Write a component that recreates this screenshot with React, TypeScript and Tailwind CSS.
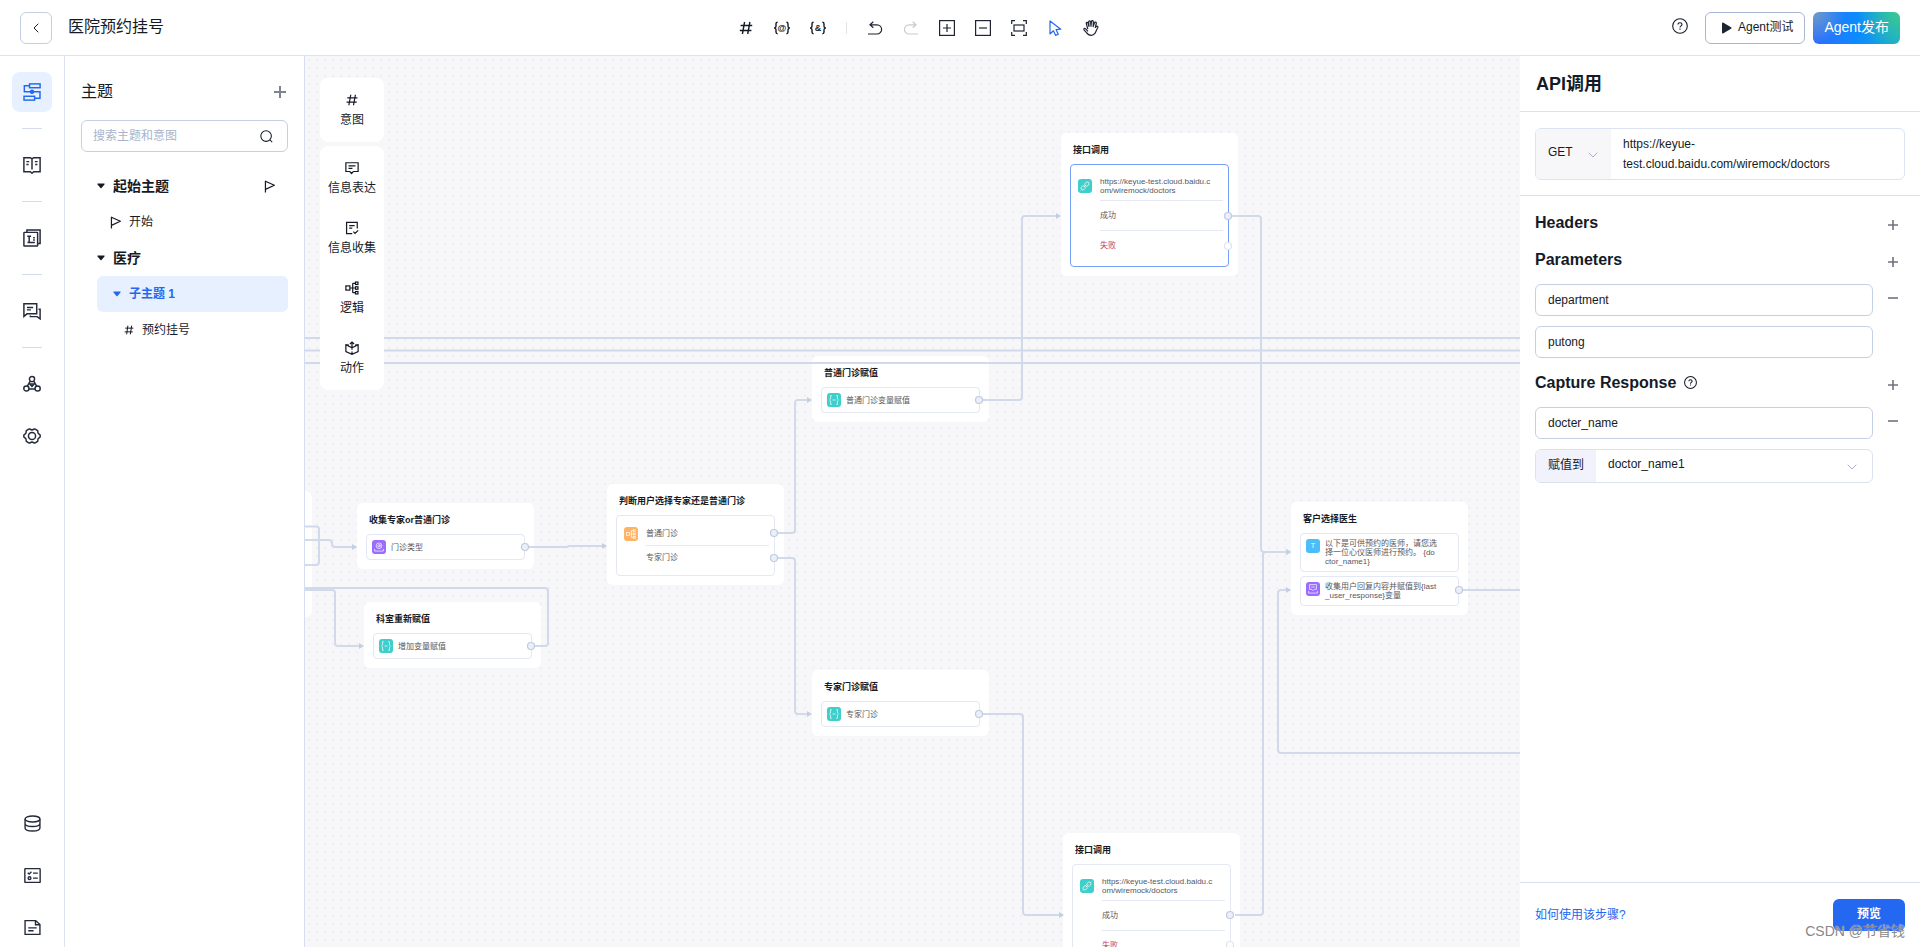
import type { ReactNode } from 'react';
import { ChevronDown, ChevronLeft } from 'lucide-react';
import clsx from 'clsx';

const INK = '#1f2433';

/* ---------- icons ---------- */

interface IconProps {
  children: ReactNode;
  size?: number;
  width?: number;
  className?: string;
}

function Icon({ children, size = 16, width = 1.2, className }: IconProps) {
  return (
    <svg
      width={size}
      height={size}
      viewBox="0 0 16 16"
      fill="none"
      stroke="currentColor"
      strokeWidth={width}
      className={clsx('shrink-0', className)}
      aria-hidden="true"
    >
      {children}
    </svg>
  );
}

const HashShape = <path d="M6.6 2 4.4 14M11.9 2 9.7 14M2.6 5.5h11.6M1.8 10.5h11.6" />;
const FlagShape = <path d="M3 15.5V1.5l11 5L3 11.5" strokeLinejoin="round" />;
const PlusShape = <path d="M8 3v10M3 8h10" />;
const MinusShape = <path d="M3 8h10" />;
const HelpShape = (
  <>
    <circle cx="8" cy="8" r="7.3" />
    <path d="M6 6.6c0-1.2.9-1.9 2-1.9s2 .7 2 1.8c0 1.3-2 1.5-2 2.9M8 10.6v1.2" />
  </>
);

const FlowShape = (
  <>
    <rect x="5.8" y=".8" width="9.4" height="3.4" />
    <rect x=".9" y="11.8" width="9.4" height="3.4" />
    <path d="M5.8 2.5H1.2v5.300h13.900v5.700h-4.800M8 6.200v3.400" />
    <circle cx="8" cy="7.800" r="1.300" fill="currentColor" />
  </>
);
const BookShape = (
  <>
    <path d="M.8 1.500h5.700L8 2.600l1.500-1.100h5.700v12.500H9.500L8 15.300 6.500 14H.8zM8 2.600V12" />
    <path d="M3 5h2.500M3 7.500h2M10.500 5H13M10.800 7.500h2" />
  </>
);
const LibraryShape = (
  <>
    <rect x=".8" y="3" width="12.200" height="12.200" rx=".5" />
    <path d="M3.500 3V.8h11.700v12H13M3.800 6.500h3.400M5.500 6.500v5M9 7.800h1.500M9 9.800h1.500M4 12h6.500" />
  </>
);
const ChatShape = (
  <>
    <path d="M.8 1.500h11.400v9H3.600L.8 12.800zM3.500 4.800h5.500M3.500 7h3.500" />
    <path d="M13.800 6.500h1.400v8.500l-2.700-2H6.500v-1" />
  </>
);
const NodesShape = (
  <>
    <circle cx="8" cy="3.600" r="2.300" />
    <circle cx="3" cy="12" r="2.300" />
    <circle cx="13" cy="12" r="2.300" />
    <path d="M6.500 5.500 3.800 9.800M9.500 5.500l2.700 4.300M5.300 12.500h5.400M6 8l2 2.200L10 8z" />
  </>
);
const GearShape = (
  <>
    <path
      d="M5.200 1.800h.6L8 2.700l2.200-.9h.6l1.900 1.100.4.500.3 2.100 1.700 1.500.2.500v1l-.2.500-1.700 1.500-.3 2.100-.4.500-1.900 1.100h-.6L8 13.300l-2.200.9h-.6l-1.900-1.100-.4-.5-.3-2.100L.9 9 .7 8.500v-1L.9 7l1.700-1.500.3-2.100.4-.5z"
      strokeLinejoin="round"
    />
    <circle cx="8" cy="8" r="3.200" />
  </>
);
const DatabaseShape = (
  <>
    <ellipse cx="8" cy="3.800" rx="7" ry="2.800" />
    <path d="M1 3.800v8.400C1 13.800 4.100 15 8 15s7-1.200 7-2.800V3.800M1 8c0 1.600 3.100 2.800 7 2.800s7-1.200 7-2.800" />
  </>
);
const ChecklistShape = (
  <>
    <rect x=".8" y="1.500" width="14.400" height="13" rx=".5" />
    <path d="m3.500 5.500 1.300 1.200 2.200-2.200M8.500 5.800H13M8.500 10.500H13" />
    <circle cx="5.200" cy="10.500" r="1.300" />
  </>
);
const DocumentShape = <path d="M1 1.500h10L15 5.200v9.300H1zM10.800 1.500v3.900H15M4 8.300h8M4 11h5" />;

const MessageShape = <path d="M1 2h14v10H9.500l-2 2.300-2-2.300H1zM4 5.500h8M4 8.300h4.500" />;
const CollectShape = <path d="M14 8.500v-7H1.800v13h6.500M4.800 5.200h6.200M4.800 8.200h3.500M9.500 12.200l2 2 3.500-3.500" />;
const TreeShape = (
  <>
    <rect x="1" y="5.600" width="4.600" height="4.800" />
    <path d="M5.600 8H12M8.800 2.600v10.800M8.800 2.600H12M8.800 13.400H12" />
    <rect x="12" y="1.200" width="2.800" height="2.800" />
    <rect x="12" y="6.600" width="2.800" height="2.800" />
    <rect x="12" y="12" width="2.800" height="2.800" />
  </>
);
const ActionShape = <path d="M4.500 4.800 1 4.200v8L8 15.200l7-3v-8l-3.500.6M8 15V12M8 10V1.200M5.600 3.400 8 1.200l2.400 2.200M1.500 4.500 8 7.800l6.500-3.300" />;

function BraceIcon({ symbol }: { symbol: string }) {
  return (
    <Icon width={1.4}>
      <path d="M3.600 2.300c-1.300 0-1.600.6-1.600 1.700v2.200c0 1-.4 1.500-1.500 1.800 1.100.3 1.500.8 1.500 1.800V12c0 1.100.3 1.700 1.600 1.700M12.400 2.300c1.300 0 1.600.6 1.600 1.700v2.200c0 1 .4 1.500 1.500 1.800-1.100.3-1.500.8-1.500 1.800V12c0 1.100-.3 1.700-1.600 1.700" />
      <text x="8" y="11" fontSize="9" fontWeight="700" textAnchor="middle" fill="currentColor" stroke="none">
        {symbol}
      </text>
    </Icon>
  );
}

/* ---------- header ---------- */

const TOOLS = [
  { label: '意图', icon: <Icon width={1.4}>{HashShape}</Icon> },
  { label: '变量', icon: <BraceIcon symbol="@" /> },
  { label: '函数', icon: <BraceIcon symbol="&" /> },
];

const VIEW_TOOLS = [
  { label: '撤销', color: 'text-[#1f2433]', icon: <Icon><path d="M1 14h9a4.600 4.600 0 0 0 0-9.200H3.500M6.300 1.800l-3.300 3 3.300 2.900" /></Icon> },
  { label: '重做', color: 'text-[#c8cad0]', icon: <Icon><path d="M15 14H6a4.600 4.600 0 0 1 0-9.200h6.500M9.700 1.800l3.300 3-3.300 2.900" /></Icon> },
  { label: '放大', color: 'text-[#1f2433]', icon: <Icon><rect x=".6" y=".6" width="14.800" height="14.800" /><path d="M8 4v8M4 8h8" /></Icon> },
  { label: '缩小', color: 'text-[#1f2433]', icon: <Icon><rect x=".6" y=".6" width="14.800" height="14.800" /><path d="M4 8h8" /></Icon> },
  { label: '适应画布', color: 'text-[#1f2433]', icon: <Icon><path d="M.7 4V.7H4M12 .7h3.300V4M15.300 12v3.300H12M4 15.300H.7V12" /><rect x="3" y="5" width="10" height="6" /></Icon> },
  { label: '选择', color: 'text-[#2468f2]', icon: <Icon><path d="M3 1v13l3.400-3.200 2.300 4.600 2.600-1.200-2.200-4.500 4.700-.5z" strokeLinejoin="round" /></Icon> },
  {
    label: '拖动',
    color: 'text-[#1f2433]',
    icon: (
      <Icon>
        <path d="M4.800 9 3.300 3.600c-.3-1.500 1.300-1.800 1.700-.5L6 6.500 5.700 2c0-1.500 1.700-1.500 1.900 0L8 6.300l.4-4.800c.2-1.300 1.800-1.200 1.900.1l-.1 5 1.300-3.800c.5-1.200 2-.7 1.800.5l-1 4.200 1-1c1-.8 2 .1 1.400 1.200-1.200 2-1.600 4.300-3 6-.8 1-1.900 1.600-3.300 1.600-2.500 0-3.800-1-4.900-2.700L1 9.800c-.5-1 .6-1.900 1.500-1.100L5 11.300" strokeLinejoin="round" />
      </Icon>
    ),
  },
];

function Header() {
  return (
    <header className="flex h-14 shrink-0 items-center justify-between border-b border-[#dfe3ee] bg-white px-5">
      <div className="flex items-center gap-4">
        <button aria-label="返回" className="flex h-8 w-8 items-center justify-center rounded-md border border-[#c4cfe3]">
          <ChevronLeft size={16} strokeWidth={1.5} />
        </button>
        <h1 className="pb-0.5 text-base leading-6">医院预约挂号</h1>
      </div>

      <div className="flex items-center gap-5">
        {TOOLS.map(t => (
          <button key={t.label} aria-label={t.label}>{t.icon}</button>
        ))}
        <span className="h-3 w-px bg-[#e2e4ea]" />
        {VIEW_TOOLS.map(t => (
          <button key={t.label} aria-label={t.label} className={t.color}>{t.icon}</button>
        ))}
      </div>

      <div className="flex items-center">
        <button aria-label="帮助" className="mr-[17px] pb-1">
          <Icon width={1.1}>{HelpShape}</Icon>
        </button>
        <button className="mr-2 flex h-8 items-center gap-1.5 rounded-md border border-[#a9b6d0] px-[11px] pl-[15px] text-xs">
          <svg width="11" height="12" viewBox="0 0 11 12" aria-hidden="true">
            <path d="M1 1.500C1 .5 1.600.2 2.500.7L10 5.200c.8.500.8 1.100 0 1.600l-7.500 4.500c-.9.500-1.500.2-1.500-.8z" fill={INK} />
          </svg>
          <span className="pb-0.5">Agent测试</span>
        </button>
        <button className="h-8 rounded-md bg-[radial-gradient(circle_at_100%_0%,#3acb8c,transparent_45%),radial-gradient(circle_at_0%_0%,#6f9fc8,transparent_35%),linear-gradient(90deg,#2f6bff,#0c8bff_50%,#18aad8)] px-[11px] pb-0.5 text-sm text-white">
          Agent发布
        </button>
      </div>
    </header>
  );
}

/* ---------- left rail ---------- */

const RAIL_TOP = [
  { label: '流程', shape: FlowShape, active: true, rule: true },
  { label: '知识', shape: BookShape, rule: true },
  { label: '词库', shape: LibraryShape, rule: true },
  { label: '对话', shape: ChatShape, rule: true },
  { label: '渠道', shape: NodesShape, rule: false },
  { label: '设置', shape: GearShape, rule: false },
];

const RAIL_BOTTOM = [
  { label: '数据', shape: DatabaseShape },
  { label: '任务', shape: ChecklistShape },
  { label: '文档', shape: DocumentShape },
];

function Rail() {
  return (
    <nav className="flex w-[65px] shrink-0 flex-col items-center justify-between border-r border-[#dce3f0] bg-white pt-4">
      <div className="flex flex-col items-center">
        {RAIL_TOP.map(item => (
          <div key={item.label} className="flex flex-col items-center">
            <button
              aria-label={item.label}
              className={clsx(
                'flex h-10 w-10 items-center justify-center rounded-lg',
                item.active ? 'bg-[#e6f0ff] text-[#2468f2]' : 'text-[#252a3a]',
              )}
            >
              <Icon size={18} width={1.3}>{item.shape}</Icon>
            </button>
            {item.rule ? <span className="my-4 h-px w-5 bg-[#d4dcec]" /> : <span className="h-3" />}
          </div>
        ))}
      </div>
      <div className="flex flex-col items-center gap-3">
        {RAIL_BOTTOM.map(item => (
          <button key={item.label} aria-label={item.label} className="flex h-10 w-10 items-center justify-center text-[#252a3a]">
            <Icon size={17} width={1.3}>{item.shape}</Icon>
          </button>
        ))}
      </div>
    </nav>
  );
}

/* ---------- topic tree ---------- */

function Caret() {
  return (
    <svg width="8" height="6" viewBox="0 0 8 6" fill="currentColor" className="shrink-0" aria-hidden="true">
      <path d="M1 .5h6c.6 0 .8.5.5.9L4.500 5c-.3.400-.7.400-1 0L.5 1.400C.2 1 .4.5 1 .5z" />
    </svg>
  );
}

function TopicPanel() {
  return (
    <aside className="flex w-60 shrink-0 flex-col border-r border-[#d5ddf0] bg-white px-4 pt-6">
      <div className="flex h-6 items-center justify-between">
        <h2 className="text-base leading-6">主题</h2>
        <button aria-label="新建主题" className="text-[#808490]">
          <Icon width={2}><path d="M8 2v12M2 8h12" /></Icon>
        </button>
      </div>

      <div className="mt-4 flex h-8 items-center rounded-md border border-[#c4d0e4] pr-3.5 pl-[11px]">
        <input
          aria-label="搜索主题和意图"
          placeholder="搜索主题和意图"
          className="min-w-0 flex-1 text-xs outline-none placeholder:text-[#a8b4cc]"
        />
        <Icon size={13} width={1.3}>
          <circle cx="7.500" cy="7.500" r="6.500" />
          <path d="m12 12 3 3" />
        </Icon>
      </div>

      <ul className="mt-4 pl-4 text-xs">
        <li className="flex h-9 items-center pr-3 text-sm font-bold">
          <Caret />
          <span className="ml-2 flex-1">起始主题</span>
          <Icon size={13} width={1.5}>{FlagShape}</Icon>
        </li>
        <li className="flex h-9 items-center pl-3">
          <Icon size={13} width={1.5}>{FlagShape}</Icon>
          <span className="ml-[7px]">开始</span>
        </li>
        <li className="flex h-9 items-center text-sm font-bold">
          <Caret />
          <span className="ml-2">医疗</span>
        </li>
        <li className="flex h-9 items-center rounded-md bg-[#e6f0ff] pl-4 font-bold text-[#2468f2]">
          <Caret />
          <span className="ml-2">子主题 1</span>
        </li>
        <li className="flex h-9 items-center pl-[27px]">
          <Icon size={10} width={1.6}>
            <path d="M6.200 1 4.200 15M12.200 1l-2 14M2 5h13M1 11h13" />
          </Icon>
          <span className="ml-2">预约挂号</span>
        </li>
      </ul>
    </aside>
  );
}

/* ---------- flow nodes ---------- */

type Badge = 'ask' | 'assign' | 'branch' | 'api' | 'text' | 'collect';

const BADGES: Record<Badge, { bg: string; shape: ReactNode }> = {
  ask: {
    bg: 'bg-[#9a6cff]',
    shape: (
      <>
        <circle cx="8" cy="6" r="4.500" />
        <circle cx="8" cy="6" r="1.800" />
        <path d="M9.800 4v3.200M1 11v3.500h14V11" />
      </>
    ),
  },
  assign: {
    bg: 'bg-[#3ccfcb]',
    shape: <path d="M4.500 1H2.500V6.500L.8 8l1.700 1.500V15h2M11.500 1h2v5.500L15.200 8l-1.700 1.500V15h-2M5.500 8h5" />,
  },
  branch: { bg: 'bg-[#ffb366]', shape: TreeShape },
  api: {
    bg: 'bg-[#3ccfcb]',
    shape: (
      <>
        <rect x="8" y="1.500" width="6" height="7" rx="3" transform="rotate(45 11 5)" />
        <rect x="2" y="7.500" width="6" height="7" rx="3" transform="rotate(45 5 11)" />
        <path d="m6 10 4-4M13.500 2.500 15 1M1 15l1.500-1.500" />
      </>
    ),
  },
  text: { bg: 'bg-[#4bbdfa]', shape: null },
  collect: { bg: 'bg-[#9a6cff]', shape: <path d="M2.500 1h11v7.500h-3.500l-2 2-2-2H2.500zM5 4.800h6M1 11v3.500h14V11" /> },
};

function NodeBadge({ kind }: { kind: Badge }) {
  const badge = BADGES[kind];
  return (
    <span className={clsx('flex h-3.5 w-3.5 shrink-0 items-center justify-center rounded-[3px] text-[8px] leading-none text-white/85', badge.bg)}>
      {badge.shape ? <Icon size={10} width={1.300}>{badge.shape}</Icon> : 'T'}
    </span>
  );
}

interface NodeCardProps {
  x: number;
  y: number;
  title: string;
  children?: ReactNode;
}

function NodeCard({ x, y, title, children }: NodeCardProps) {
  return (
    <section
      className="absolute flex w-[177px] flex-col gap-1 rounded-md bg-white px-[9px] pt-[11px] pb-[9px]"
      style={{ left: x, top: y }}
    >
      <h3 className="h-4 pl-[3px] text-[9px] leading-[13px] font-bold whitespace-nowrap">{title}</h3>
      {children}
    </section>
  );
}

function StepBox({ kind, lines }: { kind: Badge; lines: string[] }) {
  return (
    <div className="flex items-start gap-[5px] rounded border border-[#e4e7f4] py-[5px] pl-[5px]">
      <NodeBadge kind={kind} />
      <div className="flex min-h-3.5 flex-col justify-center text-[8px] leading-[9px] whitespace-nowrap text-[#55585f]">
        {lines.map(l => <p key={l}>{l}</p>)}
      </div>
    </div>
  );
}

interface BranchBoxProps {
  kind: Badge;
  rows: { lines: string[]; danger?: boolean }[];
  tall?: boolean;
  selected?: boolean;
}

function BranchBox({ kind, rows, tall, selected }: BranchBoxProps) {
  const rowHeight = tall ? 'h-[29px]' : 'h-[23px]';
  return (
    <div className={clsx('flex gap-2 rounded border py-1.5 pr-[5px] pl-[7px]', selected ? 'border-[#76a0f6]' : 'border-[#e4e7f4]')}>
      <div className={clsx('flex items-center', rowHeight)}>
        <NodeBadge kind={kind} />
      </div>
      <div className="flex-1 divide-y divide-[#e4e9f5] text-[8px] leading-[9px] whitespace-nowrap text-[#55585f]">
        {rows.map(r => (
          <div key={r.lines[0]} className={clsx('box-content flex flex-col justify-center', rowHeight, r.danger && 'text-[#c24560]')}>
            {r.lines.map(l => <p key={l}>{l}</p>)}
          </div>
        ))}
      </div>
    </div>
  );
}

const API_ROWS = [
  { lines: ['https://keyue-test.cloud.baidu.c', 'om/wiremock/doctors'] },
  { lines: ['成功'] },
  { lines: ['失败'], danger: true },
];

/* ---------- edges ---------- */

// right-angled connector with rounded corners, turning at x = mid
function elbow(x1: number, y1: number, mid: number, x2: number, y2: number) {
  const r = Math.min(3, Math.abs(y2 - y1) / 2);
  const s = y2 > y1 ? r : -r;
  return `M${x1} ${y1}H${mid - r}q${r} 0 ${r} ${s}V${y2 - s}q0 ${s} ${r} ${s}H${x2}`;
}

const ARROWS = [
  elbow(0, 484, 27, 51, 491),
  elbow(0, 534, 30, 58, 590),
  elbow(224, 491, 263, 301, 490),
  elbow(473, 477, 490, 506, 344),
  elbow(473, 502, 490, 506, 658),
  elbow(678, 344, 717, 755, 160),
  elbow(678, 658, 718, 758, 859),
  elbow(927, 160, 956, 985, 496),
  elbow(930, 859, 958, 985, 496),
  'M4000 697H976q-3 0-3-3V537q0-3 3-3H985',
];

const LINES = [
  'M0 282H4000',
  'M0 294.5H4000',
  'M0 307H4000',
  'M0 470.5H11q3 0 3 3V506q0 3-3 3H0',
  'M230 590H240q3 0 3-3V535q0-3-3-3H0',
  'M1158 534H4000',
];

const PORTS = [
  [220, 491], [226, 590], [469, 477], [469, 502], [674, 344], [674, 658],
  [923, 160], [925, 859], [1154, 534],
];
const IDLE_PORTS = [[923, 190], [925, 889]];

function Edges() {
  return (
    <svg className="pointer-events-none absolute inset-0 h-full w-full" fill="none" aria-hidden="true">
      <defs>
        <marker id="arrow" viewBox="0 0 5 6" refX="4" refY="3" markerWidth="5" markerHeight="6" markerUnits="userSpaceOnUse">
          <path d="M0 0 5 3 0 6z" fill="#c3cfe2" />
        </marker>
      </defs>
      <g stroke="#d0daea" strokeWidth="2">
        {LINES.map(d => <path key={d} d={d} />)}
        {ARROWS.map(d => <path key={d} d={d} markerEnd="url(#arrow)" />)}
      </g>
      {PORTS.map(([x, y]) => (
        <circle key={`${x}-${y}`} cx={x} cy={y} r="3.500" fill="#eceefa" stroke="#c0cbdf" strokeWidth="1.200" />
      ))}
      {IDLE_PORTS.map(([x, y]) => (
        <circle key={`${x}-${y}`} cx={x} cy={y} r="3.500" fill="#fff" stroke="#dde3f2" strokeWidth="1.200" />
      ))}
    </svg>
  );
}

/* ---------- canvas ---------- */

function PaletteItem({ label, shape }: { label: string; shape: ReactNode }) {
  return (
    <button className="flex h-[60px] w-full flex-col items-center gap-[3px] pt-[15px]">
      <Icon size={14} width={1.4}>{shape}</Icon>
      <span className="text-xs leading-5">{label}</span>
    </button>
  );
}

function Canvas() {
  return (
    <main className="relative min-w-0 flex-1 overflow-hidden bg-[#f7f7fa] bg-[radial-gradient(circle,#eeeff2_1px,transparent_1px)] bg-[size:8px_8px]">
      <section className="absolute -left-[170px] top-[435px] h-[126px] w-[177px] rounded-md bg-white" />

      <NodeCard x={52} y={447} title="收集专家or普通门诊">
        <StepBox kind="ask" lines={['门诊类型']} />
      </NodeCard>
      <NodeCard x={59} y={546} title="科室重新赋值">
        <StepBox kind="assign" lines={['增加变量赋值']} />
      </NodeCard>
      <NodeCard x={302} y={428} title="判断用户选择专家还是普通门诊">
        <BranchBox kind="branch" rows={[{ lines: ['普通门诊'] }, { lines: ['专家门诊'] }]} />
      </NodeCard>
      <NodeCard x={507} y={300} title="普通门诊赋值">
        <StepBox kind="assign" lines={['普通门诊变量赋值']} />
      </NodeCard>
      <NodeCard x={507} y={614} title="专家门诊赋值">
        <StepBox kind="assign" lines={['专家门诊']} />
      </NodeCard>
      <NodeCard x={756} y={77} title="接口调用">
        <BranchBox kind="api" rows={API_ROWS} tall selected />
      </NodeCard>
      <NodeCard x={758} y={777} title="接口调用">
        <BranchBox kind="api" rows={API_ROWS} tall />
      </NodeCard>
      <NodeCard x={986} y={446} title="客户选择医生">
        <StepBox kind="text" lines={['以下是可供预约的医师，请您选', '择一位心仪医师进行预约。 {do', 'ctor_name1}']} />
        <StepBox kind="collect" lines={['收集用户回复内容并赋值到{last', '_user_response}变量']} />
      </NodeCard>

      <Edges />

      <div className="absolute top-[22px] left-[15px] flex w-16 flex-col gap-1">
        <div className="rounded-lg bg-white pb-1">
          <PaletteItem label="意图" shape={HashShape} />
        </div>
        <div className="rounded-lg bg-white pb-1">
          <PaletteItem label="信息表达" shape={MessageShape} />
          <PaletteItem label="信息收集" shape={CollectShape} />
          <PaletteItem label="逻辑" shape={TreeShape} />
          <PaletteItem label="动作" shape={ActionShape} />
        </div>
      </div>
    </main>
  );
}

/* ---------- API panel ---------- */

function SectionTitle({ children, addLabel }: { children: ReactNode; addLabel: string }) {
  return (
    <div className="flex h-[37px] items-center justify-between pr-1">
      <h3 className="flex items-center gap-2 text-base leading-6 font-bold">{children}</h3>
      <button aria-label={addLabel} className="pt-1 text-[#6f737d]">
        <Icon width={1.600}>{PlusShape}</Icon>
      </button>
    </div>
  );
}

function Field({ label, value, removable }: { label: string; value: string; removable?: boolean }) {
  return (
    <div className="flex items-start">
      <input
        aria-label={label}
        defaultValue={value}
        className="h-8 min-w-0 flex-1 rounded-md border border-[#c4d0e4] px-3 text-xs outline-none"
      />
      <div className="w-8 pt-1.5 pl-3">
        {removable && (
          <button aria-label={`删除${label}`} className="block text-[#6f737d]">
            <Icon width={1.600}>{MinusShape}</Icon>
          </button>
        )}
      </div>
    </div>
  );
}

function ApiPanel() {
  return (
    <aside className="flex w-[400px] shrink-0 flex-col bg-white">
      <div className="flex h-14 items-center border-b border-[#dce1ee] px-4">
        <h2 className="text-lg leading-6 font-bold">API调用</h2>
      </div>

      <div className="border-b border-[#dce1ee] px-[15px] pt-4 pb-[15px]">
        <div className="flex overflow-hidden rounded-md border border-[#dce3f2]">
          <div className="relative flex w-[75px] shrink-0 bg-[#f7f7fa]">
            <select aria-label="请求方法" className="w-full appearance-none pb-1 pl-3 text-xs outline-none">
              <option>GET</option>
              <option>POST</option>
            </select>
            <ChevronDown size={16} strokeWidth={1.500} className="pointer-events-none absolute top-[18px] right-2.5 text-[#a5b1cc]" />
          </div>
          <textarea
            aria-label="请求地址"
            rows={2}
            defaultValue="https://keyue-test.cloud.baidu.com/wiremock/doctors"
            className="min-w-0 flex-1 resize-none px-3 py-[5px] text-xs leading-5 outline-none"
          />
        </div>
      </div>

      <div className="flex-1 px-[15px] pt-2">
        <SectionTitle addLabel="添加 Header">Headers</SectionTitle>
        <SectionTitle addLabel="添加 Parameter">Parameters</SectionTitle>
        <div className="my-1.5 flex flex-col gap-2.5">
          <Field label="参数名" value="department" removable />
          <Field label="参数值" value="putong" />
        </div>
        <SectionTitle addLabel="添加 Capture Response">
          Capture Response
          <Icon size={13} width={1.300}>{HelpShape}</Icon>
        </SectionTitle>
        <div className="mt-1.5 flex flex-col gap-2.5">
          <Field label="响应字段" value="docter_name" removable />
          <div className="relative mr-8 flex h-[34px] overflow-hidden rounded-md border border-[#dce1f0]">
            <label htmlFor="assign-to" className="flex w-[60px] shrink-0 items-center justify-center bg-[#f2f2fc] pb-0.5 text-xs">
              赋值到
            </label>
            <select id="assign-to" className="flex-1 appearance-none pb-1 pl-3 text-xs outline-none">
              <option>doctor_name1</option>
            </select>
            <ChevronDown size={16} strokeWidth={1.500} className="pointer-events-none absolute top-[9px] right-3 text-[#a5b1cc]" />
          </div>
        </div>
      </div>

      <div className="relative flex h-[65px] items-center justify-between border-t border-[#d8e0f0] px-[15px]">
        <a href="#help" className="text-xs text-[#2468f2]">如何使用该步骤?</a>
        <button className="h-8 w-[72px] rounded-md bg-[#2468f2] pb-0.5 text-xs font-bold text-white">预览</button>
        <span className="pointer-events-none absolute right-[15px] bottom-1 text-sm leading-6 text-[#888888] [text-shadow:0_0_1px_#ffffff]">
          CSDN @节省钱
        </span>
      </div>
    </aside>
  );
}

export default function App() {
  return (
    <div className="flex h-screen flex-col overflow-hidden font-['Liberation_Sans','Noto_Sans_CJK_SC',sans-serif] text-[#151b26]">
      <Header />
      <div className="flex min-h-0 flex-1">
        <Rail />
        <TopicPanel />
        <Canvas />
        <ApiPanel />
      </div>
    </div>
  );
}
